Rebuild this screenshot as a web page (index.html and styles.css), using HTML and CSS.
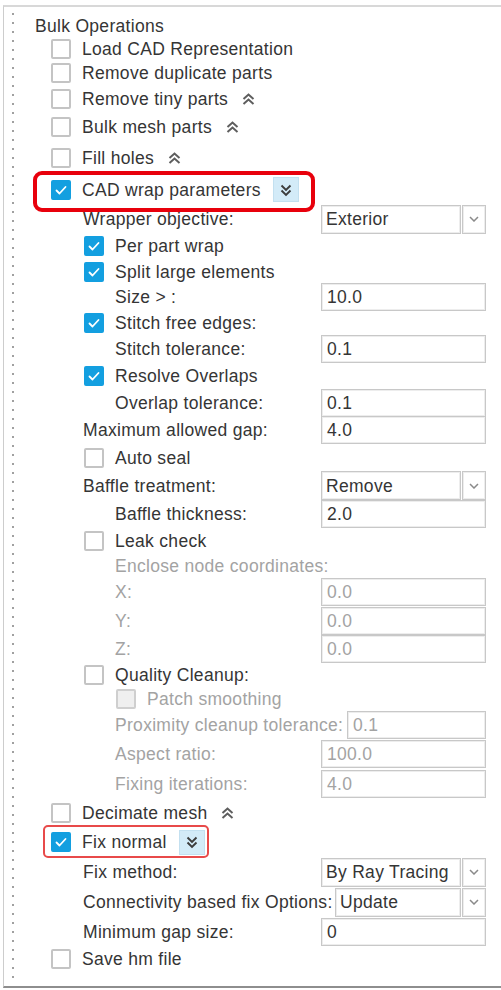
FILE: index.html
```html
<!DOCTYPE html>
<html>
<head>
<meta charset="utf-8">
<link rel="stylesheet" href="styles.css">
</head>
<body>
<div class="frame">
  <div class="guide"></div>
  <div class="tree">
    <div class="row h23 l0"><span>Bulk Operations</span></div>
    <div class="row h24 l1"><span class="cb"></span><span>Load CAD Representation</span></div>
    <div class="row h24 l1"><span class="cb"></span><span>Remove duplicate parts</span></div>
    <div class="row h27 l1"><span class="cb"></span><span>Remove tiny parts</span>
      <svg class="up" width="15" height="14" viewBox="0 0 15 14"><path d="M2.5 7 L7.5 2.5 L12.5 7 M2.5 12 L7.5 7.5 L12.5 12"/></svg></div>
    <div class="row h30 l1"><span class="cb"></span><span>Bulk mesh parts</span>
      <svg class="up" width="15" height="14" viewBox="0 0 15 14"><path d="M2.5 7 L7.5 2.5 L12.5 7 M2.5 12 L7.5 7.5 L12.5 12"/></svg></div>
    <div class="row h32 l1"><span class="cb"></span><span>Fill holes</span>
      <svg class="up" width="15" height="14" viewBox="0 0 15 14"><path d="M2.5 7 L7.5 2.5 L12.5 7 M2.5 12 L7.5 7.5 L12.5 12"/></svg></div>
    <div class="row h31 l1"><span class="cb on"><svg width="20" height="20" viewBox="0 0 20 20"><path d="M5.5 10.5 L8.5 13.5 L14.5 7"/></svg></span><span>CAD wrap parameters</span>
      <span class="expbtn"><svg width="14" height="14" viewBox="0 0 14 14"><path d="M2.5 2.5 L7 7 L11.5 2.5 M2.5 7.5 L7 12 L11.5 7.5"/></svg></span>
      <span class="hl hl-big"></span></div>
    <div class="row h28 t2"><span>Wrapper objective:</span>
      <span class="select"><span class="sel-text">Exterior</span><span class="sel-arrow"><svg width="10" height="6" viewBox="0 0 10 6"><path d="M1 1 L5 5 L9 1"/></svg></span></span></div>
    <div class="row h26 l2"><span class="cb on"><svg width="20" height="20" viewBox="0 0 20 20"><path d="M5.5 10.5 L8.5 13.5 L14.5 7"/></svg></span><span>Per part wrap</span></div>
    <div class="row h25 l2"><span class="cb on"><svg width="20" height="20" viewBox="0 0 20 20"><path d="M5.5 10.5 L8.5 13.5 L14.5 7"/></svg></span><span>Split large elements</span></div>
    <div class="row h26 t3"><span>Size &gt; :</span><span class="field">10.0</span></div>
    <div class="row h26 l2"><span class="cb on"><svg width="20" height="20" viewBox="0 0 20 20"><path d="M5.5 10.5 L8.5 13.5 L14.5 7"/></svg></span><span>Stitch free edges:</span></div>
    <div class="row h26 t3"><span>Stitch tolerance:</span><span class="field">0.1</span></div>
    <div class="row h27 l2"><span class="cb on"><svg width="20" height="20" viewBox="0 0 20 20"><path d="M5.5 10.5 L8.5 13.5 L14.5 7"/></svg></span><span>Resolve Overlaps</span></div>
    <div class="row h27 t3"><span>Overlap tolerance:</span><span class="field">0.1</span></div>
    <div class="row h28 t2"><span>Maximum allowed gap:</span><span class="field">4.0</span></div>
    <div class="row h27 l2"><span class="cb"></span><span>Auto seal</span></div>
    <div class="row h29 t2"><span>Baffle treatment:</span>
      <span class="select"><span class="sel-text">Remove</span><span class="sel-arrow"><svg width="10" height="6" viewBox="0 0 10 6"><path d="M1 1 L5 5 L9 1"/></svg></span></span></div>
    <div class="row h28 t3"><span>Baffle thickness:</span><span class="field">2.0</span></div>
    <div class="row h25 l2"><span class="cb"></span><span>Leak check</span></div>
    <div class="row h25 t3 dis"><span>Enclose node coordinates:</span></div>
    <div class="row h28 t3 dis"><span>X:</span><span class="field">0.0</span></div>
    <div class="row h29 t3 dis"><span>Y:</span><span class="field">0.0</span></div>
    <div class="row h28 t3 dis"><span>Z:</span><span class="field">0.0</span></div>
    <div class="row h24 l2"><span class="cb"></span><span>Quality Cleanup:</span></div>
    <div class="row h24 l3 dis"><span class="cb off"></span><span>Patch smoothing</span></div>
    <div class="row h28 t3 dis"><span>Proximity cleanup tolerance:</span><span class="field f-prox">0.1</span></div>
    <div class="row h30 t3 dis"><span>Aspect ratio:</span><span class="field">100.0</span></div>
    <div class="row h29 t3 dis"><span>Fixing iterations:</span><span class="field">4.0</span></div>
    <div class="row h29 l1"><span class="cb"></span><span>Decimate mesh</span>
      <svg class="up" width="15" height="14" viewBox="0 0 15 14"><path d="M2.5 7 L7.5 2.5 L12.5 7 M2.5 12 L7.5 7.5 L12.5 12"/></svg></div>
    <div class="row h30 l1"><span class="cb on"><svg width="20" height="20" viewBox="0 0 20 20"><path d="M5.5 10.5 L8.5 13.5 L14.5 7"/></svg></span><span>Fix normal</span>
      <span class="expbtn"><svg width="14" height="14" viewBox="0 0 14 14"><path d="M2.5 2.5 L7 7 L11.5 2.5 M2.5 7.5 L7 12 L11.5 7.5"/></svg></span>
      <span class="hl hl-small"></span></div>
    <div class="row h30 t2"><span>Fix method:</span>
      <span class="select"><span class="sel-text">By Ray Tracing</span><span class="sel-arrow"><svg width="10" height="6" viewBox="0 0 10 6"><path d="M1 1 L5 5 L9 1"/></svg></span></span></div>
    <div class="row h30 t2"><span>Connectivity based fix Options:</span>
      <span class="select s-conn"><span class="sel-text">Update</span><span class="sel-arrow"><svg width="10" height="6" viewBox="0 0 10 6"><path d="M1 1 L5 5 L9 1"/></svg></span></span></div>
    <div class="row h29 t2"><span>Minimum gap size:</span><span class="field">0</span></div>
    <div class="row h26 l1"><span class="cb"></span><span>Save hm file</span></div>
  </div>
</div>
</body>
</html>
```

FILE: styles.css
```css
html, body {
  margin: 0;
  padding: 0;
  background: #ffffff;
}

body {
  font-family: "Liberation Sans", Arial, sans-serif;
  font-size: 17.5px;
  letter-spacing: 0.3px;
  color: #353535;
}

.frame {
  margin: 5px 0 0 3px;
  height: 983px;
  box-sizing: border-box;
  border-top: 2px solid #d8d8d8;
  border-left: 1px solid #cdcdcd;
  border-bottom: 2px solid #8e8e8e;
  display: flex;
}

.guide {
  width: 2px;
  margin: 6px 0 2px 8px;
  background: repeating-linear-gradient(to bottom, #a0a0a0 0 2px, transparent 2px 9px);
}

.tree {
  flex: 1;
  padding: 7px 15px 0 0;
}

.row {
  display: flex;
  align-items: center;
  position: relative;
  white-space: nowrap;
}

.row > span:not(.cb):not(.field):not(.select):not(.expbtn):not(.hl) {
  padding-top: 1px;
}

.h23 { height: 23px; }
.h24 { height: 24px; }
.h25 { height: 25px; }
.h26 { height: 26px; }
.h27 { height: 27px; }
.h28 { height: 28px; }
.h29 { height: 29px; }
.h30 { height: 30px; }
.h31 { height: 31px; }
.h32 { height: 32px; }

.l0 { padding-left: 21px; }
.l1 { padding-left: 37px; }
.l2 { padding-left: 70px; }
.l3 { padding-left: 102px; }
.t2 { padding-left: 69px; }
.t3 { padding-left: 101px; }

.dis { color: #a3a3a3; }

.cb {
  width: 20px;
  height: 20px;
  box-sizing: border-box;
  border: 2px solid #c4c4c4;
  border-radius: 2px;
  background: #fff;
  margin-right: 11px;
  flex-shrink: 0;
  display: flex;
}

.cb.on {
  background: #139fe0;
  border-color: #139fe0;
}

.cb.on svg {
  margin: -2px;
}

.cb.on path {
  fill: none;
  stroke: #ffffff;
  stroke-width: 1.8;
  stroke-linecap: round;
  stroke-linejoin: round;
}

.cb.off {
  background: #efefef;
  border-color: #cfcfcf;
}

.up {
  margin-left: 13px;
  flex-shrink: 0;
}

.up path {
  fill: none;
  stroke: #5e5e5e;
  stroke-width: 2;
}

.expbtn {
  width: 26px;
  height: 25px;
  box-sizing: border-box;
  background: #d3ebf8;
  border: 1px solid #c3e0f0;
  margin-left: 12px;
  display: flex;
  align-items: center;
  justify-content: center;
}

.expbtn path {
  fill: none;
  stroke: #3c3c3c;
  stroke-width: 1.9;
}

.hl {
  position: absolute;
  box-sizing: border-box;
  pointer-events: none;
}

.hl-big {
  left: 19px;
  top: -3px;
  width: 282px;
  height: 41px;
  border: 4px solid #e8000c;
  border-radius: 9px;
}

.hl-small {
  left: 29px;
  top: -2px;
  width: 166px;
  height: 33px;
  border: 2px solid #e84a4a;
  border-radius: 5px;
}

.field {
  margin-left: auto;
  width: 165px;
  height: 28px;
  box-sizing: border-box;
  border: 1px solid #c8c8c8;
  box-shadow: inset 0 0 0 1px #ededed;
  padding: 1px 0 0 5px;
  display: flex;
  align-items: center;
  flex-shrink: 0;
  background: #fff;
}

.f-prox {
  width: 139px;
}

.select {
  margin-left: auto;
  width: 165px;
  height: 29px;
  display: flex;
  gap: 1px;
  flex-shrink: 0;
}

.s-conn {
  width: 151px;
}

.sel-text {
  flex: 1;
  box-sizing: border-box;
  border: 1px solid #c8c8c8;
  box-shadow: inset 0 0 0 1px #ededed;
  padding: 1px 0 0 4px;
  display: flex;
  align-items: center;
}

.sel-arrow {
  width: 24px;
  box-sizing: border-box;
  border: 1px solid #c8c8c8;
  box-shadow: inset 0 0 0 1px #ededed;
  display: flex;
  align-items: center;
  justify-content: center;
}

.sel-arrow path {
  fill: none;
  stroke: #8a8a8a;
  stroke-width: 1.5;
}
```
